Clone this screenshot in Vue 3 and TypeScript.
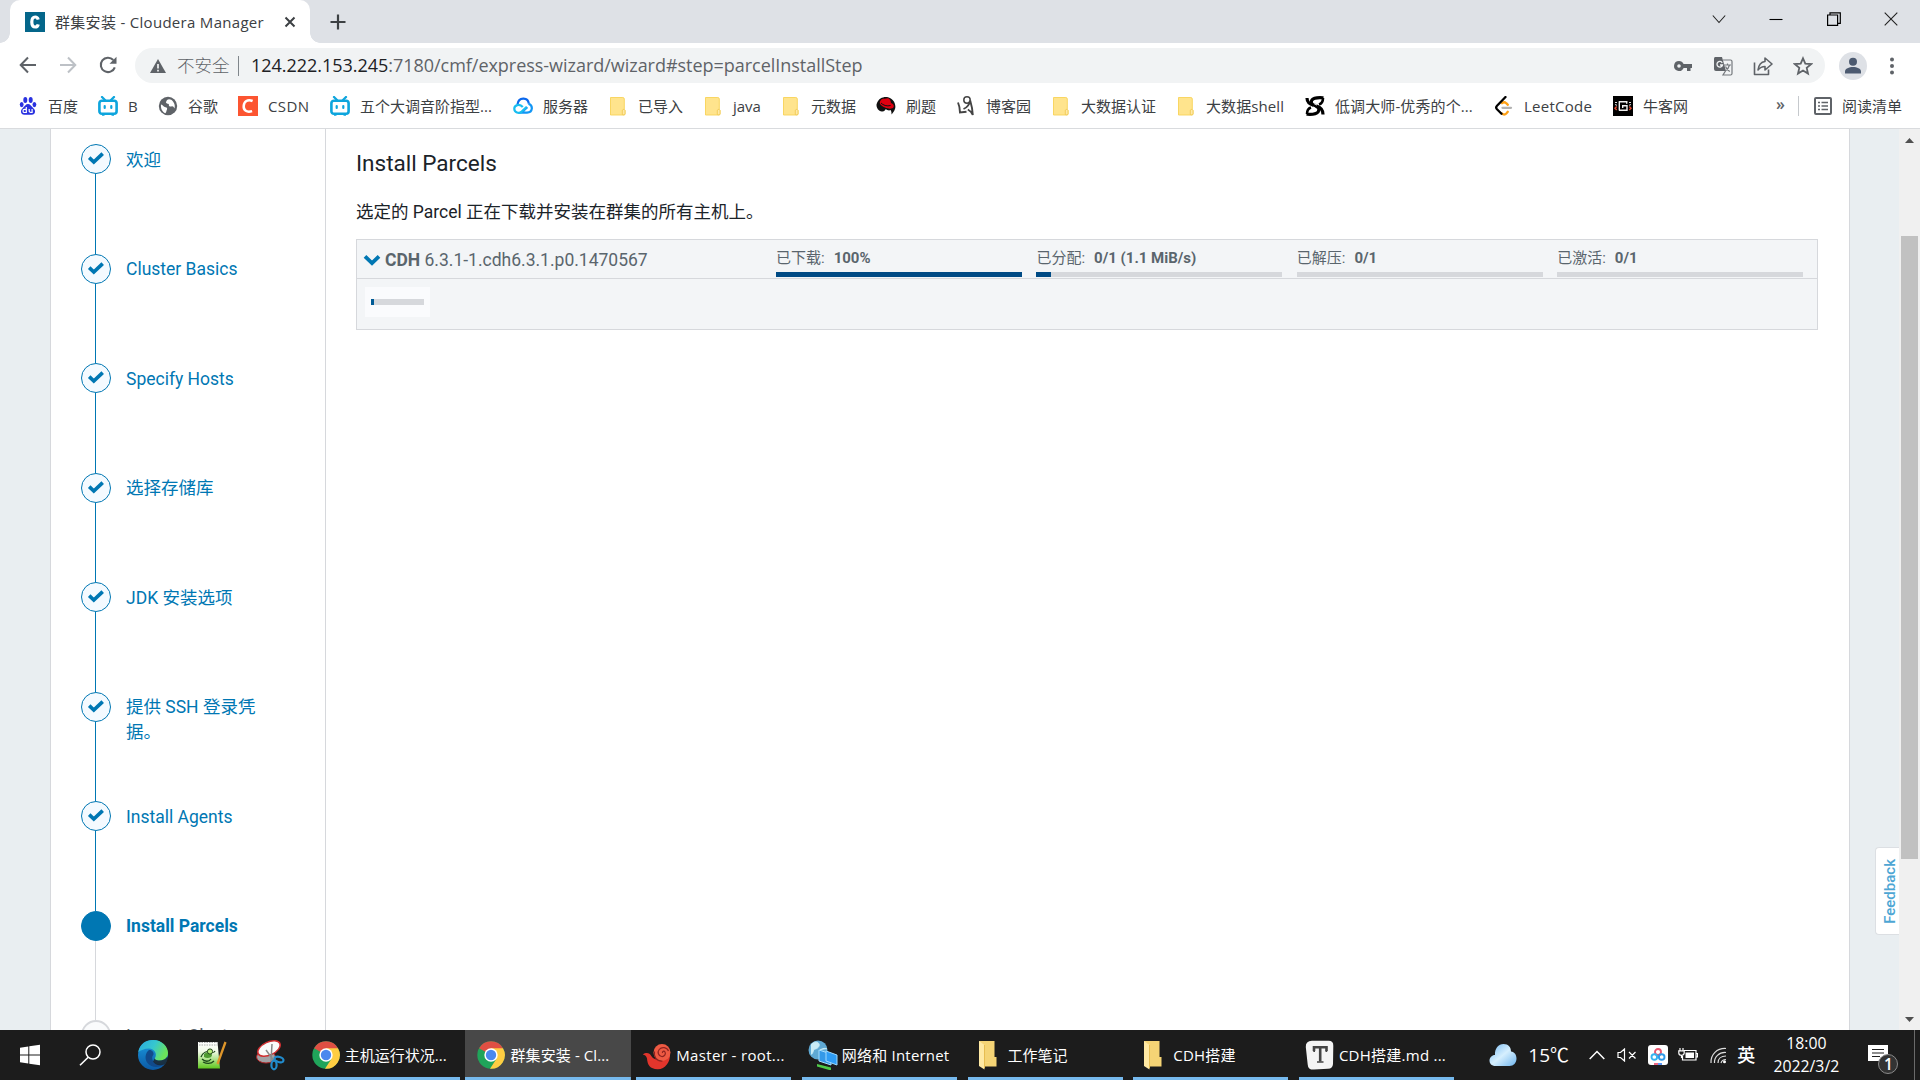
<script setup lang="ts">
interface Bookmark { icon: string; label: string; width: number; spacing?: number }
interface Step { label: string; state: 'done' | 'current' | 'todo' }
interface Metric { label: string; value: string; percent: number }
interface Task { icon: string; label: string; active?: boolean; spacing?: number }

const bookmarks: Bookmark[] = [
  { icon: 'baidu', label: '百度', width: 80 },
  { icon: 'bili', label: 'B', width: 60 },
  { icon: 'globe', label: '谷歌', width: 80 },
  { icon: 'csdn', label: 'CSDN', width: 92, spacing: 0.4 },
  { icon: 'bili', label: '五个大调音阶指型...', width: 183 },
  { icon: 'cloud', label: '服务器', width: 95 },
  { icon: 'folder', label: '已导入', width: 95 },
  { icon: 'folder', label: 'java', width: 78 },
  { icon: 'folder', label: '元数据', width: 95 },
  { icon: 'redhat', label: '刷题', width: 80 },
  { icon: 'cnblogs', label: '博客园', width: 95 },
  { icon: 'folder', label: '大数据认证', width: 125 },
  { icon: 'folder', label: '大数据shell', width: 129, spacing: 0.1 },
  { icon: 'knot', label: '低调大师-优秀的个...', width: 189, spacing: 0.1 },
  { icon: 'leet', label: 'LeetCode', width: 119, spacing: 0.25 },
  { icon: 'nowcoder', label: '牛客网', width: 90 },
]

const steps: Step[] = [
  { label: '欢迎', state: 'done' },
  { label: 'Cluster Basics', state: 'done' },
  { label: 'Specify Hosts', state: 'done' },
  { label: '选择存储库', state: 'done' },
  { label: 'JDK 安装选项', state: 'done' },
  { label: '提供 SSH 登录凭据。', state: 'done' },
  { label: 'Install Agents', state: 'done' },
  { label: 'Install Parcels', state: 'current' },
  { label: 'Inspect Cluster', state: 'todo' },
]

const metrics: Metric[] = [
  { label: '已下载:', value: '100%', percent: 100 },
  { label: '已分配:', value: '0/1 (1.1 MiB/s)', percent: 6 },
  { label: '已解压:', value: '0/1', percent: 0 },
  { label: '已激活:', value: '0/1', percent: 0 },
]

const tasks: Task[] = [
  { icon: 'chrome', label: '主机运行状况...' },
  { icon: 'chrome', label: '群集安装 - Cl...', active: true, spacing: 0.1 },
  { icon: 'shell', label: 'Master - root...', spacing: 0.36 },
  { icon: 'network', label: '网络和 Internet', spacing: 0.2 },
  { icon: 'folder', label: '工作笔记' },
  { icon: 'folder', label: 'CDH搭建', spacing: 0.2 },
  { icon: 'typora', label: 'CDH搭建.md ...', spacing: 0.25 },
]
</script>

<template>
  <div class="screen">
    <header class="tabstrip">
      <div class="tab">
        <svg class="favicon" viewBox="0 0 20 20"><rect width="20" height="20" fill="#04668a" /><path d="M13.200 7.600C12.700 5.800 11.600 5 10.200 5 8 5 6.800 6.900 6.800 10s1.200 5 3.400 5c1.500 0 2.600-.9 3-2.700" fill="none" stroke="#fff" stroke-width="3.200" /></svg>
        <span class="tab-title">群集安装 - Cloudera Manager</span>
        <svg class="tab-close" viewBox="0 0 12 12"><path d="M1.500 1.500l9 9M10.500 1.500l-9 9" stroke="#3c4043" stroke-width="2" /></svg>
      </div>
      <svg class="new-tab" viewBox="0 0 16 16"><path d="M8 .5v15M.5 8h15" stroke="#3c4043" stroke-width="2.200" /></svg>
      <div class="window-buttons">
        <svg width="14" height="14" viewBox="0 0 14 14"><path d="M.8 3.500L7 10.500l6.200-7" fill="none" stroke="#222" stroke-width="1.100" /></svg>
        <svg width="14" height="14" viewBox="0 0 14 14"><path d="M.5 7.500h13" stroke="#000" stroke-width="1.100" /></svg>
        <svg width="14" height="14" viewBox="0 0 14 14"><path d="M.6 3h10v10.400H.6zM3 3V.8h10.300v10.500h-2.500" fill="none" stroke="#000" stroke-width="1.200" /></svg>
        <svg width="14" height="14" viewBox="0 0 14 14"><path d="M.7.7l12.600 12.600M13.300.7L.7 13.300" stroke="#222" stroke-width="1.100" /></svg>
      </div>
    </header>

    <div class="toolbar">
      <nav class="nav">
        <svg width="18" height="18" viewBox="0 0 18 18"><path d="M17 9H2M9 1.500L1.700 9 9 16.500" fill="none" stroke="#5f6368" stroke-width="2" /></svg>
        <svg width="18" height="18" viewBox="0 0 18 18"><path d="M1 9h15M9 1.500L16.300 9 9 16.500" fill="none" stroke="#bdc1c6" stroke-width="2" /></svg>
        <svg width="18" height="18" viewBox="0 0 18 18"><path d="M15.800 11.300A7.200 7.200 0 1 1 14.300 4" fill="none" stroke="#5f6368" stroke-width="2.100" /><path d="M17.500.8v7h-7z" fill="#5f6368" /></svg>
      </nav>
      <div class="omnibox">
        <svg class="warn" viewBox="0 0 16 14"><path d="M8 0l8 14H0z" fill="#5f6368" /><path d="M8 5v4.500M8 10.800v1.700" stroke="#f1f3f4" stroke-width="1.700" /></svg>
        <span class="insecure">不安全</span>
        <span class="url-sep"></span>
        <span class="url"><b>124.222.153.245</b>:7180/cmf/express-wizard/wizard#step=parcelInstallStep</span>
        <div class="omni-actions">
          <svg width="20" height="20" viewBox="0 0 20 20"><path fill-rule="evenodd" d="M6 5a5 5 0 1 0 4.600 7H14v3h3.500v-3H19V8h-8.400A5 5 0 0 0 6 5zm0 3.200a1.800 1.800 0 1 1 0 3.600 1.800 1.800 0 0 1 0-3.600z" fill="#5f6368" /></svg>
          <svg width="20" height="20" viewBox="0 0 20 20"><path d="M2 1h7l4 14H3a2 2 0 0 1-2-2V3a2 2 0 0 1 1-2z" fill="#5f6368" /><path d="M10 4h7.500c.8 0 1.500.6 1.500 1.500v12c0 .9-.7 1.500-1.500 1.500H10l2.500-4M11 9h7M14.500 7.500V9M16.500 9c-.7 3-2.300 4.600-4.200 6M12.500 10.500c1 2.600 2.600 4 4.300 5" fill="none" stroke="#74787c" stroke-width="1.200" /><path d="M9.200 6.800A2.800 2.800 0 1 0 9.500 9H7" fill="none" stroke="#f1f3f4" stroke-width="1.300" /></svg>
          <svg width="20" height="20" viewBox="0 0 20 20"><path d="M1.500 6.500v12h14v-5M12 2l7 6-7 6v-3.500c-3 0-5 1-7 3.500.6-4.500 2.700-8 7-8.500z" fill="none" stroke="#5f6368" stroke-width="1.600" stroke-linejoin="round" /></svg>
          <svg width="20" height="20" viewBox="0 0 20 20"><path d="M10 2.300l2.300 5.300 5.800.5-4.400 3.800 1.300 5.700-5-3-5 3 1.300-5.700-4.400-3.800 5.800-.5z" fill="none" stroke="#5f6368" stroke-width="1.800" /></svg>
        </div>
      </div>
      <svg class="avatar" viewBox="0 0 28 28"><circle cx="14" cy="14" r="14" fill="#dee1e6" /><circle cx="14" cy="9.800" r="4" fill="#4c5a70" /><path d="M6 21.500v-2c0-3 4-4.600 8-4.600s8 1.600 8 4.600v2z" fill="#4c5a70" /></svg>
      <svg class="kebab" viewBox="0 0 4 18"><circle cx="2" cy="2.500" r="2" fill="#5f6368" /><circle cx="2" cy="9" r="2" fill="#5f6368" /><circle cx="2" cy="15.500" r="2" fill="#5f6368" /></svg>
    </div>

    <div class="bookmarks">
      <div v-for="(b, i) in bookmarks" :key="i" class="bookmark" :style="{ width: b.width + 'px' }">
        <svg class="bm-icon" viewBox="0 0 20 20">
          <g v-if="b.icon === 'baidu'" fill="#2a32e0"><ellipse cx="7.300" cy="4" rx="2" ry="3" /><ellipse cx="12.700" cy="4" rx="2" ry="3" /><ellipse cx="3.700" cy="8.600" rx="1.900" ry="2.600" /><ellipse cx="16.400" cy="8.600" rx="1.900" ry="2.600" /><path d="M10 8c2.200 0 3 2 4.700 3.500 2.300 2 2.600 3.300 2.200 5-.6 2.500-3 2.300-6.900 2.300s-6.300.2-6.900-2.300c-.4-1.700 0-3 2.200-5C7 10 7.800 8 10 8z" /><path d="M8.300 11v5.500H6.500c-2 0-2-3.200 0-3.200h1.800M11.200 13v2.300c0 1 .5 1.200 2.900 1.200V13" fill="none" stroke="#fff" stroke-width="1.200" /></g>
          <g v-else-if="b.icon === 'bili'" fill="none" stroke="#0ea5dd"><rect x="1.400" y="4.800" width="17.200" height="13" rx="2.500" stroke-width="2.600" /><path d="M4 1l3 3M16 1l-3 3" stroke-width="2.300" stroke-linecap="round" /><path d="M6.700 10v2M13.300 10v2" stroke-width="2.200" stroke-linecap="round" /><path d="M4 19h2.500M13.500 19H16" stroke-width="1.600" /></g>
          <g v-else-if="b.icon === 'globe'"><circle cx="10" cy="10" r="9.200" fill="#5f6368" /><path d="M3 8.500c2 .3 2.500 2.500 4.500 2.700 1.800.2 2 1.500 1.300 2.700-.6 1-.3 2.400-1.500 3.300C4.500 16 2.500 13 3 8.500zM9 4c2-1.500 4.500-.5 6 1.500 1.800 2.300 2.200 5 1.400 7-.8-1.700-1.400-2.500-3-2-1.600.4-2.900-.6-2.500-2 .3-1-2.600-.4-3-2.300z" fill="#fff" /></g>
          <g v-else-if="b.icon === 'csdn'"><rect width="20" height="20" fill="#fc5531" /><path d="M14.600 5C9.500 2.800 6 5.500 5.700 10c-.3 4.300 3 6.800 8.400 5.100" fill="none" stroke="#fff" stroke-width="2.500" /></g>
          <g v-else-if="b.icon === 'cloud'" fill="none" stroke-width="2.200"><path d="M4.500 8.500C5 4.500 7.500 2.600 10.500 2.700c3 .1 5 2.300 5.300 5" stroke="#0b68ed" /><path d="M15.500 7.700c4.800 1.600 4.500 8.800-1.500 9H8.300l6-5.600" stroke="#1296f5" /><path d="M9.800 11c-3.500-4-8.700-1.700-8.500 2 .2 3.600 4.500 4.800 7 3L13.500 11" stroke="#19bdf0" /></g>
          <g v-else-if="b.icon === 'folder'"><path d="M2.500 1.500h12.300a1.500 1.500 0 0 1 1.500 1.500v10.500l.7 1v3.500a1 1 0 0 1-1 1H2.500z" fill="#ffe48d" stroke="#f8d357" stroke-width=".9" /><path d="M14.300 18.500v-4.300l1.500-1 1.200 1.300V18c0 1-2 1-2.700.5z" fill="#ffe9a7" stroke="#efc74b" stroke-width=".8" /></g>
          <g v-else-if="b.icon === 'redhat'"><path d="M1 7C2.500 2.500 7 .5 11 1c5 .7 8.500 5 8.400 10-.1 2.500-1.600 4.800-3.800 7.500-.2-1.500 0-3-1-4.500-2 1-3.500-.2-5-.7-.8 1-1.200 2.500-3.800 2.200C2.500 15 .3 12 .5 8.500z" fill="#111" /><path d="M4.300 5C5.800 1.800 9 3 10.500 2.500c2.200-.7 4.300 1.200 4.500 4.500 2.200.7 3.500 2.400 2.500 4.300-1.200 2-5.500 1.600-8.500.2C5.500 10 2.500 7.500 4.300 5z" fill="#e00010" /><path d="M5 7c2 2.200 6 3.600 9.600 2.500" stroke="#111" fill="none" /></g>
          <g v-else-if="b.icon === 'cnblogs'" fill="none" stroke="#444"><circle cx="11" cy="4" r="3.200" stroke-width="1.500" /><path d="M14 4.500c-.5 4-3 7-6.500 8.500M14.200 4.500c1.500 5 2.300 9.500 2.600 14.500-1-2.500-3-4.600-5-5.500M2 6.500c1.500 3.500 2 6 2 10l6.500-.8" stroke-width="1.900" /></g>
          <g v-else-if="b.icon === 'knot'" fill="none" stroke="#000"><path d="M2 2c0 4.500 2.500 6 7 7.500s6 3.500 4 6.500c-2.500 3-7 2.500-11.500 2.200" stroke-width="3.200" /><path d="M18.500 1.800C14 1.500 9 1 7 4c-1.800 2.800.5 4.800 4.500 6S18 13.500 18 18.500" stroke-width="3.200" /><path d="M2 18c0-3 1-5.500 4-6.500M18 2c0 3-1 5.500-4 6.500" stroke-width="2.600" /><path d="M9 4.800c-1.500 2 .3 3.300 3 4.200M11 15.200c1.300-1.700 0-3.200-3-4.200" stroke="#fff" stroke-width="1" /></g>
          <g v-else-if="b.icon === 'leet'" fill="none" stroke-linecap="round" stroke-width="2.300"><path d="M13.800 15.800l-1.500 1.700c-1.200 1.300-3 1.300-4.200 0" stroke="#ffa116" /><path d="M8 7.200c1.300-1.300 3-1.200 4.200 0l1.700 1.600" stroke="#ffa116" /><path d="M11.500 1L3 9.800c-1 1-1 2.300 0 3.400l4.500 4.500" stroke="#000" /><path d="M8.500 11.800H17" stroke="#b3b3b3" /></g>
          <g v-else><rect width="20" height="20" fill="#000" /><path d="M5.800 5.800h8.700M6.300 5.500v9M6 14.300h8v-4.500H9.700M9.700 9v3M13.700 5.500v2.200" fill="none" stroke="#eee" stroke-width="1.400" /><path d="M2 6.500h2M2 8.500l2 .8M18 6.500h-2M18 8.500l-2 .8" fill="none" stroke="#ddd" /><path d="M3.700 10.500L2 12.200 3.700 14M16.300 10.500l1.700 1.700-1.700 1.800" fill="none" stroke="#e4472e" stroke-width="1.400" /></g>
        </svg>
        <span class="bm-label" :style="{ letterSpacing: (b.spacing ?? 0) + 'px' }">{{ b.label }}</span>
      </div>
      <span class="overflow">»</span>
      <span class="bm-sep"></span>
      <svg class="reading-icon" viewBox="0 0 18 18"><rect x="1" y="1" width="16" height="16" rx="1" fill="none" stroke="#5f6368" stroke-width="2" /><path d="M4 5.500h2M4 9h2M4 12.500h2M7.500 5.500H14M7.500 9H14M7.500 12.500H14" stroke="#5f6368" stroke-width="1.600" /></svg>
      <span class="reading-label">阅读清单</span>
    </div>

    <main class="page">
      <aside class="steps">
        <div v-for="s in steps" :key="s.label" class="step" :class="s.state">
          <div class="rail">
            <span class="dot"><svg v-if="s.state === 'done'" width="18" height="14" viewBox="0 0 18 14"><path d="M2.200 6.700l4.600 4.300L15.700 2.700" fill="none" stroke="#0077b3" stroke-width="3.700" /></svg></span>
            <span class="line"></span>
          </div>
          <span class="step-label">{{ s.label }}</span>
        </div>
      </aside>
      <section class="content">
        <h1>Install Parcels</h1>
        <p>选定的 Parcel 正在下载并安装在群集的所有主机上。</p>
        <div class="parcel">
          <div class="parcel-head">
            <div class="parcel-name">
              <svg width="18" height="12" viewBox="0 0 18 12"><path d="M2 2.300l7 6.700 7-6.700" fill="none" stroke="#0077b3" stroke-width="3.800" /></svg>
              <span><b>CDH</b> 6.3.1-1.cdh6.3.1.p0.1470567</span>
            </div>
            <div v-for="m in metrics" :key="m.label" class="metric">
              <div class="metric-text">{{ m.label }}<b>{{ m.value }}</b></div>
              <div class="bar"><div class="fill" :style="{ width: m.percent + '%' }"></div></div>
            </div>
          </div>
          <div class="parcel-body">
            <div class="host"><div class="host-bar"><div class="host-fill"></div></div></div>
          </div>
        </div>
      </section>
      <div class="gutter"><div class="feedback"><span>Feedback</span></div></div>
      <div class="scrollbar">
        <svg width="9" height="5" viewBox="0 0 9 5"><path d="M0 5L4.500 0 9 5z" fill="#505050" /></svg>
        <div class="thumb"></div>
        <svg class="down" width="9" height="5" viewBox="0 0 9 5"><path d="M0 0l4.500 5L9 0z" fill="#505050" /></svg>
      </div>
    </main>

    <footer class="taskbar">
      <div class="pinned">
        <svg width="60" height="50" viewBox="0 0 60 50"><path d="M20 17.700l8.300-1.200v8H20zM29.300 16.300L40 14.800v9.700H29.300zM20 25.500h8.300v8L20 32.300zM29.300 25.500H40v9.700l-10.700-1.500z" fill="#fff" /></svg>
        <svg width="60" height="50" viewBox="0 0 60 50"><circle cx="33" cy="22" r="7" fill="none" stroke="#fff" stroke-width="1.500" /><path d="M28.200 27.200L20 35.200" stroke="#fff" stroke-width="1.600" /></svg>
        <svg width="60" height="50" viewBox="0 0 60 50"><defs><linearGradient id="edgeTop" x1="0" y1="0" x2="1" y2=".4"><stop offset="0" stop-color="#2aa9e0" /><stop offset=".55" stop-color="#36c7cf" /><stop offset="1" stop-color="#6be35a" /></linearGradient><linearGradient id="edgeLow" x1="0" y1="0" x2="0" y2="1"><stop offset="0" stop-color="#1b9de2" /><stop offset="1" stop-color="#0c59a4" /></linearGradient></defs><circle cx="33" cy="25" r="15" fill="url(#edgeLow)" /><path d="M18.200 22C20 13.500 26 10 33 10c9 0 15 6.500 15 13 0 5-4 7.500-8.500 7.500-3.500 0-5.200-1.200-4.500-2.500 2.500-4-.5-9.500-6-9.500-4.500 0-8.500 2-10.800 3.500z" fill="url(#edgeTop)" /><path d="M29 20c-4 3-4.500 9-1.500 13 4 5 11.500 5 17.500 1.200-3 1.200-9 1-12-3.200-1.500-2.500-1-4.500.5-6.500.5-2-1.500-5-4.500-4.500z" fill="#114a8b" /><path d="M35 28c-.7 1.300 1 2.500 4.500 2.500 3.300 0 6.500-1.300 7.800-4l1.200 3-4 5c-5 1.500-9.500.5-11.500-3z" fill="#1e1e1e" opacity=".75" /></svg>
        <svg width="60" height="50" viewBox="0 0 60 50"><defs><linearGradient id="pad" x1="0" y1="0" x2="0" y2="1"><stop offset="0" stop-color="#fff" /><stop offset=".35" stop-color="#f3fbe9" /><stop offset="1" stop-color="#5fc81e" /></linearGradient></defs><path d="M18 12h19.500l2.500 26.500H18z" fill="url(#pad)" /><path d="M19 12.500h18.500M19 15h18.700" stroke="#aaa" stroke-dasharray="1.500 1" /><path d="M21 27c2-5 6-6 9-5s4 1 5-1M22 29c3 3 7 3 9 0M23 32c4 2 8 2 11-1" fill="none" stroke="#1c4a1a" stroke-width="1.300" /><path d="M24 24c3-3 8-2 8 1s-5 4-8 2z" fill="#4f9c31" /><circle cx="30" cy="21.500" r="2.600" fill="#b6ef77" stroke="#23431c" /><path d="M45.500 12L37.500 34" stroke="#df962a" stroke-width="2.300" /></svg>
        <svg width="60" height="50" viewBox="0 0 60 50"><ellipse cx="26" cy="27" rx="9.500" ry="6" fill="#a2a2a5" stroke="#b32426" /><ellipse cx="29" cy="18.500" rx="12" ry="6.500" transform="rotate(-25 29 18.500)" fill="#fafafa" stroke="#cf2d2f" stroke-width="1.500" /><path d="M26 20l8 11M32 14l-1 17" stroke="#888" stroke-width="1.500" /><ellipse cx="39" cy="29.500" rx="4.600" ry="2.600" transform="rotate(15 39 29.500)" fill="none" stroke="#218bcc" stroke-width="2.200" /><ellipse cx="34" cy="35" rx="2.600" ry="4.300" fill="none" stroke="#218bcc" stroke-width="2.200" /></svg>
      </div>
      <div v-for="t in tasks" :key="t.label" class="task" :class="{ active: t.active }">
        <svg class="task-icon" viewBox="0 0 30 30">
          <g v-if="t.icon === 'chrome'"><circle cx="15" cy="15" r="13.700" fill="#20a45a" /><path d="M15 15L3.100 8.200A13.700 13.700 0 0 1 27 8.200z" fill="#df4f43" /><path d="M15 15V8.200h12A13.700 13.700 0 0 1 14 28.700l6.500-10z" fill="#ffcd42" /><circle cx="15" cy="15" r="6.700" fill="#fff" /><circle cx="15" cy="15" r="5.200" fill="#4b88ee" /></g>
          <g v-else-if="t.icon === 'shell'"><path d="M.8 14.500c3.500-2.500 7-1.500 8.500 1.500C12 20 17 22 28 14c.5 8-5 15.500-12.500 15.200C8 29 5.500 25 5 18.500c-.5-2.300-2-3.500-4.200-4z" fill="#e2352c" /><circle cx="20" cy="12.500" r="8.500" fill="#ee5a43" /><path d="M20.500 13c-.5-1.500 1.500-2.500 2.500-1 1.200 2.200-.7 4.800-3.300 4.500-3.500-.4-4.500-4.500-2.500-7 2.500-3 7.800-2.300 9.300 1.500M12.500 11.500c-1 5 2 10 8 9.500" fill="none" stroke="#8f2320" stroke-width="1.200" /></g>
          <g v-else-if="t.icon === 'network'"><circle cx="10" cy="10" r="9.500" fill="#5fa9d4" /><path d="M3 5c3-4 7-3.500 8-1S9 9 7 9 5 15 3 14M12 10c3-2 6-2 7-1" fill="#c9ecf7" stroke="#c9ecf7" /><path d="M11 10l12 4v11l-12-4z" fill="#3499e8" stroke="#a4ddff" /><path d="M18 11l11 4v10l-11-4z" fill="#2f9df5" stroke="#9dd9ff" /><path d="M9 24l14 3.500v3L9 26.500z" fill="#4fcb48" /></g>
          <g v-else-if="t.icon === 'folder'"><path d="M5 1h15.500v16h2v9.500H9z" fill="#f5d475" /><path d="M5 1l5.500 4v24.500L5 26z" fill="#ffe9a4" /><path d="M10.500 5v23" stroke="#e7bd51" /></g>
          <g v-else><path d="M7 .8h16.500q5 0 4.800 5L28 24q-.3 4.500-5 4.800l-14 .8q-6 .3-6.300-5.200L.8 7Q.5 1 7 .8z" fill="#f4f4f4" /><path d="M9 11V7.300h12.500V11M15.200 7.500v14" fill="none" stroke="#444" stroke-width="2.600" /><path d="M12 22h6.500M8.300 11.300h1.700M20.500 11.300h1.700" stroke="#444" stroke-width="1.600" /></g>
        </svg>
        <span class="task-label" :style="{ letterSpacing: (t.spacing ?? 0) + 'px' }">{{ t.label }}</span>
      </div>
      <div class="tray">
        <svg class="weather" width="28" height="24" viewBox="0 0 28 24"><defs><linearGradient id="sky" x1="0" y1="0" x2="1" y2="1"><stop offset="0" stop-color="#71b7f2" /><stop offset=".5" stop-color="#d6effe" /><stop offset="1" stop-color="#6eb4ed" /></linearGradient></defs><path d="M6.500 23C2.500 23 .5 20.500.5 17.500S3 12 6 12C5.500 5.500 9.500 1 14.500 1c5 0 7.500 3.300 7.500 7.500 3.500.3 5.500 3.500 5.500 7 0 4.500-3 7.500-7 7.500z" fill="url(#sky)" /></svg>
        <span class="temp">15℃</span>
        <svg class="caret" width="16" height="10" viewBox="0 0 16 10"><path d="M.7 9L8 1.500 15.300 9" fill="none" stroke="#fff" stroke-width="1.500" /></svg>
        <svg class="mute" width="20" height="14" viewBox="0 0 20 14"><path d="M1 4.500h2.500L7.500 1v12L3.500 9.500H1zM12 4l6.500 6.500M18.500 4L12 10.500" fill="none" stroke="#fff" stroke-width="1.200" /></svg>
        <svg class="disk" width="20" height="20" viewBox="0 0 20 20"><rect width="20" height="20" rx="3" fill="#fff" /><circle cx="10" cy="7" r="3" fill="none" stroke="#e95770" stroke-width="1.900" /><circle cx="6.300" cy="12" r="2.800" fill="none" stroke="#35b4ef" stroke-width="1.900" /><circle cx="13.700" cy="12" r="2.800" fill="none" stroke="#2e9aea" stroke-width="1.900" /><path d="M6 19h4" stroke="#e7345a" stroke-width="1.500" /><path d="M10 19h4" stroke="#2776f0" stroke-width="1.500" /></svg>
        <svg class="battery" width="20" height="14" viewBox="0 0 20 14"><path d="M6 2.500h12v9.500H4.500V8M18 5.500h1.500v3.500H18M2 0v2.500M5 0v2.500M.8 2.800h5.400V5c0 3-5.400 3-5.400 0zM3.500 7.500V10" fill="none" stroke="#fff" stroke-width="1.200" /><path d="M7.500 4.500h8.500v5.500H7.500z" fill="#fff" /></svg>
        <svg class="wifi" width="17" height="17" viewBox="0 0 17 17"><path d="M1 16C.5 7.500 7 1 16 1.500M4.500 16C4 10 9 5 16 5.500M8 16c0-4 3-7 8-7" fill="none" stroke="#ddd" stroke-width="1.200" /><path d="M11 16c.5-2 2-3.500 5-3.500" fill="none" stroke="#ddd" stroke-width="1.200" /><circle cx="14.500" cy="14.800" r="1.500" fill="#fff" /></svg>
        <span class="ime">英</span>
        <div class="clock"><span>18:00</span><span>2022/3/2</span></div>
        <div class="notice">
          <svg width="20" height="20" viewBox="0 0 20 20"><path d="M0 0h20v16h-5l-4 4v-4H0z" fill="#fff" /><path d="M4 4.500h12M4 8h12M4 11.500h8" stroke="#1e1e1e" stroke-width="1.100" /></svg>
          <span class="badge">1</span>
        </div>
        <span class="peek"></span>
      </div>
    </footer>
  </div>
</template>

<style>
body { margin: 0; overflow: hidden; }
</style>

<style scoped>
* { box-sizing: border-box; }
svg { display: block; flex: none; }
.screen { width: 1920px; height: 1080px; display: flex; flex-direction: column; overflow: hidden; background: #fff; font-family: "Open Sans", "Noto Sans CJK SC", sans-serif; color: #3c4043; white-space: nowrap; }

.tabstrip { height: 43px; flex: none; display: flex; align-items: center; background: #dee1e6; padding-left: 10px; }
.tab { position: relative; width: 300px; height: 43px; background: #fff; border-radius: 10px 10px 0 0; display: flex; align-items: center; padding-left: 15px; }
.tab::before, .tab::after { content: ""; position: absolute; bottom: 0; width: 10px; height: 10px; }
.tab::before { left: -10px; background: radial-gradient(circle at 0 0, transparent 9.5px, #fff 10px); }
.tab::after { right: -10px; background: radial-gradient(circle at 100% 0, transparent 9.5px, #fff 10px); }
.favicon { width: 20px; height: 20px; }
.tab-title { width: 219px; margin-left: 10px; font-size: 15px; letter-spacing: .3px; line-height: 22px; }
.tab-close { width: 12px; height: 12px; margin-left: 10px; }
.new-tab { width: 16px; height: 16px; margin-left: 19.500px; }
.window-buttons { margin-left: auto; margin-right: 22px; display: flex; gap: 43.300px; padding-bottom: 6px; }

.toolbar { height: 45px; flex: none; display: flex; align-items: center; }
.nav { display: flex; gap: 22px; padding-left: 19px; width: 135px; padding-bottom: 1px; }
.omnibox { width: 1690px; height: 35px; border-radius: 18px; background: #f1f3f4; display: flex; align-items: center; padding-left: 15px; }
.warn { width: 16px; height: 14px; }
.insecure { margin-left: 11px; width: 53px; font-size: 17.500px; line-height: 24px; padding-bottom: 2px; color: #5f6368; font-weight: 300; }
.url-sep { width: 1px; height: 20px; background: #80868b; margin: 0 12px 0 8px; }
.url { font-size: 18px; letter-spacing: -.03px; line-height: 24px; padding-bottom: 2px; color: #5f6368; }
.url b { font-weight: 400; color: #202124; }
.omni-actions { margin-left: auto; margin-right: 12.500px; display: flex; gap: 20px; }
.avatar { width: 28px; height: 28px; margin-left: 14px; }
.kebab { width: 4px; height: 18px; margin-left: 23px; }

.bookmarks { height: 41px; flex: none; display: flex; align-items: center; padding-left: 18px; padding-bottom: 4px; border-bottom: 1px solid #d9dbde; font-size: 15px; }
.bookmark { display: flex; align-items: center; flex: none; }
.bm-icon { width: 20px; height: 20px; margin-right: 10px; }
.bm-label, .reading-label { line-height: 20px; padding-bottom: 1px; }
.overflow { width: 22px; margin-left: 73px; font-weight: 600; line-height: 20px; font-size: 16px; padding-bottom: 4px; color: #5f6368; }
.bm-sep { width: 1px; height: 20px; background: #c6c9cd; margin-right: 15px; }
.reading-icon { width: 18px; height: 18px; margin-right: 10px; }

.page { height: 901px; flex: none; display: flex; overflow: hidden; background: #e9eef1; font-family: Roboto, "Noto Sans CJK SC", sans-serif; padding-left: 50px; }
.steps { width: 276px; flex: none; border: solid #d6d8dc; border-width: 0 1px; background: #fff; padding: 15px 30px 0; }
.step { height: 109.500px; display: flex; color: #0077b3; }
.rail { width: 30px; display: flex; flex-direction: column; align-items: center; flex: none; }
.dot { width: 30px; height: 30px; border-radius: 50%; border: 1px solid #0077b3; background: #f4faff; display: flex; align-items: center; justify-content: center; flex: none; }
.dot svg { margin-bottom: 2px; }
.line { flex: 1; width: 1px; margin-right: 1px; background: #0077b3; }
.step-label { width: 140px; margin-left: 15px; padding-top: 3.500px; font-size: 17.500px; line-height: 25px; white-space: normal; }
.current .dot { background: #0077b3; }
.current .step-label { font-weight: 700; padding-top: 3px; }
.current .line, .todo .line { background: #d6d8dc; }
.todo { color: #5a656d; }
.todo .step-label { padding-top: 4px; }
.todo .dot { border: 2px solid #d6d8dc; background: #fafbfc; }

.content { width: 1523px; flex: none; background: #fff; padding: 19px 0 0 30px; }
h1 { margin: 0; font-size: 22.500px; line-height: 30px; font-weight: 400; color: #1b2329; }
p { margin: 22px 0 0; font-size: 17.500px; line-height: 25px; color: #1b2329; font-weight: 400; }
.parcel { width: 1462px; height: 91px; margin-top: 14px; border: 1px solid #d6d8dc; background: #f3f5f7; color: #5a656d; }
.parcel-head { height: 39px; border-bottom: 1px solid #d6d8dc; display: flex; }
.parcel-name { width: 419px; flex: none; display: flex; align-items: center; padding-left: 6px; font-size: 17.500px; gap: 4px; padding-top: 1px; }
.parcel-name b { font-weight: 700; }
.metric { width: 246px; margin-right: 14.400px; display: flex; flex-direction: column; justify-content: space-between; padding: 7px 0 1px; flex: none; }
.metric-text { font-size: 15px; line-height: 22px; }
.metric-text b { margin-left: 9px; font-weight: 700; }
.bar { height: 5px; background: #d6d8dc; }
.fill { height: 5px; background: #004b85; }
.parcel-body { padding: 8px; }
.host { width: 65px; height: 30px; background: #fafbfd; padding: 12px 6px; }
.host-bar { height: 6px; background: #d6d8dc; }
.host-fill { width: 3px; height: 6px; background: #005b96; }
.gutter { width: 50px; border-left: 1px solid #d6d8dc; padding-top: 718px; display: flex; justify-content: flex-end; flex: none; }
.feedback { width: 24px; height: 88px; background: #fff; border: 1px solid #dcdfe3; border-width: 1.500px 0 1.500px 1.500px; border-radius: 4px 0 0 4px; display: flex; align-items: center; justify-content: center; padding-left: 4px; }
.feedback span { writing-mode: vertical-rl; transform: rotate(180deg); font-size: 15px; font-weight: 500; color: #4da6d4; line-height: 20px; }
.scrollbar { width: 21px; background: #f0f0f0; display: flex; flex-direction: column; align-items: center; padding-top: 9px; flex: none; }
.thumb { width: 17px; height: 623px; background: #c1c1c1; margin-top: 93px; }
.down { margin-top: 158px; }

.taskbar { height: 50px; flex: none; display: flex; background: #1c1c1c; color: #fff; }
.pinned { width: 299.500px; flex: none; display: flex; }
.task { width: 165.700px; flex: none; height: 50px; display: flex; align-items: center; padding-left: 11.300px; font-size: 15px; background: linear-gradient(#76b9ed, #76b9ed) center bottom / 155px 3px no-repeat; }
.task.active { background: linear-gradient(#76b9ed, #76b9ed) center bottom / 100% 3px no-repeat, #484848; }
.task-icon { width: 30px; height: 30px; margin-right: 4px; }
.task-label { line-height: 24px; padding-bottom: 1px; }
.tray { flex: 1; display: flex; align-items: center; min-width: 0; }
.weather { margin-left: 30px; }
.temp { width: 50px; margin-left: 11px; font-size: 19px; line-height: 26px; padding-bottom: 1px; }
.caret { margin-left: 11px; }
.mute { margin-left: 11.500px; }
.disk { margin-left: 11px; }
.battery { margin-left: 10px; }
.wifi { margin-left: 12px; }
.ime { margin-left: 10.500px; width: 18px; font-size: 18px; font-weight: 500; line-height: 24px; padding-bottom: 1px; }
.clock { width: 80px; margin-left: 11px; display: flex; flex-direction: column; align-items: center; font-size: 15.800px; line-height: 23px; padding-bottom: 1px; }
.notice { position: relative; width: 30px; height: 20px; margin-left: 22px; }
.badge { position: absolute; left: 10px; top: 9px; width: 20px; height: 20px; border-radius: 50%; border: 1px solid #8a8a8a; background: #333; font-size: 15.500px; font-weight: 600; line-height: 18px; text-align: center; }
.peek { width: 1px; height: 50px; background: #6a6a6a; margin-left: auto; margin-right: 5px; }
</style>
